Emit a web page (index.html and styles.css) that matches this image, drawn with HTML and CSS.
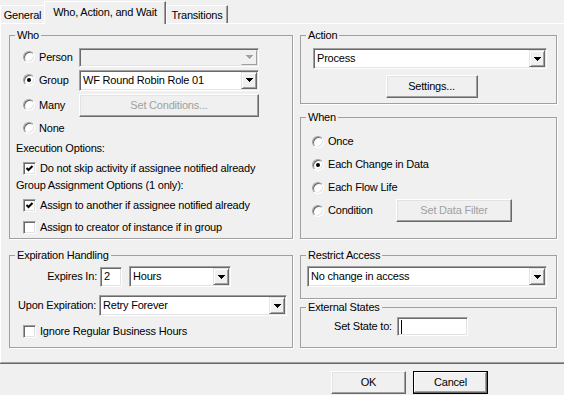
FILE: index.html
```html
<!DOCTYPE html>
<html>
<head>
<meta charset="utf-8">
<link rel="stylesheet" href="styles.css">
</head>
<body>
<div class="tabs">
  <div class="tab tab-general">General</div>
  <div class="tab tab-active">Who, Action, and Wait</div>
  <div class="tab tab-trans">Transitions</div>
</div>
<div class="panel">
  <div class="col col-left">
    <fieldset class="group g-who">
      <legend>Who</legend>
      <div class="who-body">
        <div class="row who-r1">
          <div class="opt who-opt"><span class="radio"></span><span>Person</span></div>
          <div class="combo combo-who combo-dis"><span class="combo-text"></span><span class="combo-btn"><svg width="7" height="4" viewBox="0 0 7 4"><path d="M0 0h7v1h-1v1h-1v1h-1v1h-1v-1h-1v-1h-1v-1h-1z" fill="#a0a0a0"/></svg></span></div>
        </div>
        <div class="row who-r2">
          <div class="opt who-opt"><span class="radio on"></span><span>Group</span></div>
          <div class="combo combo-who"><span class="combo-text">WF Round Robin Role 01</span><span class="combo-btn"><svg width="7" height="4" viewBox="0 0 7 4"><path d="M0 0h7v1h-1v1h-1v1h-1v1h-1v-1h-1v-1h-1v-1h-1z" fill="#000"/></svg></span></div>
        </div>
        <div class="row who-r3">
          <div class="opt who-opt"><span class="radio"></span><span>Many</span></div>
          <button class="btn btn-dis btn-cond">Set Conditions...</button>
        </div>
        <div class="row who-r4">
          <div class="opt who-opt"><span class="radio"></span><span>None</span></div>
        </div>
        <div class="row lbl-row exec-row">Execution Options:</div>
        <div class="row chk-row cb1-row"><span class="check"><svg width="9" height="9" viewBox="0 0 9 9"><polyline points="1.5,4 3.5,6 7.5,2" fill="none" stroke="#000" stroke-width="2"/></svg></span><span>Do not skip activity if assignee notified already</span></div>
        <div class="row lbl-row grp-row">Group Assignment Options (1 only):</div>
        <div class="row chk-row cb2-row"><span class="check"><svg width="9" height="9" viewBox="0 0 9 9"><polyline points="1.5,4 3.5,6 7.5,2" fill="none" stroke="#000" stroke-width="2"/></svg></span><span>Assign to another if assignee notified already</span></div>
        <div class="row chk-row cb3-row"><span class="check"></span><span>Assign to creator of instance if in group</span></div>
      </div>
    </fieldset>
    <fieldset class="group g-exp">
      <legend>Expiration Handling</legend>
      <div class="exp-body">
        <div class="row exp-r1">
          <span class="exp-lbl1">Expires In:</span>
          <div class="field field-num">2</div>
          <div class="combo combo-hours"><span class="combo-text">Hours</span><span class="combo-btn"><svg width="7" height="4" viewBox="0 0 7 4"><path d="M0 0h7v1h-1v1h-1v1h-1v1h-1v-1h-1v-1h-1v-1h-1z" fill="#000"/></svg></span></div>
        </div>
        <div class="row exp-r2">
          <span class="exp-lbl2">Upon Expiration:</span>
          <div class="combo combo-upon"><span class="combo-text">Retry Forever</span><span class="combo-btn"><svg width="7" height="4" viewBox="0 0 7 4"><path d="M0 0h7v1h-1v1h-1v1h-1v1h-1v-1h-1v-1h-1v-1h-1z" fill="#000"/></svg></span></div>
        </div>
        <div class="row chk-row exp-r3"><span class="check"></span><span>Ignore Regular Business Hours</span></div>
      </div>
    </fieldset>
  </div>
  <div class="col col-right">
    <fieldset class="group g-action">
      <legend>Action</legend>
      <div class="action-body">
        <div class="combo combo-action"><span class="combo-text">Process</span><span class="combo-btn"><svg width="7" height="4" viewBox="0 0 7 4"><path d="M0 0h7v1h-1v1h-1v1h-1v1h-1v-1h-1v-1h-1v-1h-1z" fill="#000"/></svg></span></div>
        <div class="settings-row"><button class="btn btn-settings">Settings...</button></div>
      </div>
    </fieldset>
    <fieldset class="group g-when">
      <legend>When</legend>
      <div class="when-body">
        <div class="row when-row"><div class="opt"><span class="radio"></span><span>Once</span></div></div>
        <div class="row when-row"><div class="opt"><span class="radio on"></span><span>Each Change in Data</span></div></div>
        <div class="row when-row"><div class="opt"><span class="radio"></span><span>Each Flow Life</span></div></div>
        <div class="row when-row"><div class="opt when-cond"><span class="radio"></span><span>Condition</span></div><button class="btn btn-dis btn-filter">Set Data Filter</button></div>
      </div>
    </fieldset>
    <fieldset class="group g-restrict">
      <legend>Restrict Access</legend>
      <div class="restrict-body">
        <div class="combo combo-restrict"><span class="combo-text">No change in access</span><span class="combo-btn"><svg width="7" height="4" viewBox="0 0 7 4"><path d="M0 0h7v1h-1v1h-1v1h-1v1h-1v-1h-1v-1h-1v-1h-1z" fill="#000"/></svg></span></div>
      </div>
    </fieldset>
    <fieldset class="group g-ext">
      <legend>External States</legend>
      <div class="ext-body">
        <span class="ext-lbl">Set State to:</span>
        <div class="field field-state"><span class="caret"></span></div>
      </div>
    </fieldset>
  </div>
</div>
<div class="buttons">
  <button class="btn btn-ok">OK</button>
  <button class="btn btn-cancel">Cancel</button>
</div>
</body>
</html>
```
FILE: styles.css
```css
html, body {
  margin: 0;
  padding: 0;
  background: #f0f0f0;
}
body {
  font-family: "Liberation Sans", Arial, sans-serif;
  font-size: 11px;
  line-height: 13px;
  letter-spacing: -0.2px;
  color: #000;
  width: 564px;
  height: 395px;
  overflow: hidden;
}

/* Tabs */
.tabs {
  display: flex;
  align-items: flex-end;
  height: 23px;
}
.tab {
  box-sizing: border-box;
  height: 18px;
  background: #f0f0f0;
  border-top: 1px solid #fff;
  border-left: 1px solid #fff;
  border-right: 1px solid #696969;
  box-shadow: inset -1px 0 0 #a0a0a0;
  display: flex;
  align-items: center;
  justify-content: center;
  padding-top: 2px;
  white-space: nowrap;
}
.tab-general {
  width: 44px;
  border-right: 0;
  box-shadow: none;
}
.tab-trans { width: 62px; }
.tab-active {
  width: 122px;
  height: 23px;
  margin-bottom: -1px;
  position: relative;
  z-index: 1;
  padding-top: 0;
  padding-bottom: 2px;
}

/* Panel */
.panel {
  display: flex;
  gap: 7px;
  border-top: 1px solid #fff;
  border-left: 1px solid #fff;
  border-bottom: 1px solid #a0a0a0;
  box-shadow: 0 1px 0 #696969;
  padding: 5px 0 14px 8px;
}
.col {
  display: flex;
  flex-direction: column;
}
.col-left { width: 284px; gap: 10px; }
.col-right { width: 257px; }

.group {
  margin: 0;
  padding: 0;
  min-width: 0;
  box-sizing: border-box;
  border: 1px solid #a0a0a0;
  box-shadow: 1px 1px 0 #fff;
}
.group legend {
  padding: 0 2px;
  margin-left: 5px;
  line-height: 13px;
  white-space: nowrap;
}
.g-who { height: 210px; }
.g-exp { height: 99px; }
.g-action { height: 75px; }
.g-when { height: 128px; margin-top: 7px; }
.g-restrict { height: 50px; margin-top: 10px; }
.g-ext { height: 47px; margin-top: 2px; }

.row {
  display: flex;
  align-items: center;
  white-space: nowrap;
}
.opt {
  display: flex;
  align-items: center;
  gap: 4px;
}

/* Radio */
.radio {
  width: 12px;
  height: 12px;
  box-sizing: border-box;
  border-radius: 50%;
  border: 1px solid;
  border-color: #a0a0a0 #fff #fff #a0a0a0;
  background: #fff;
  box-shadow: inset 1px 1px 0 #696969, inset -1px -1px 0 #e3e3e3;
  position: relative;
  flex: none;
}
.radio.on::after {
  content: "";
  position: absolute;
  left: 3px;
  top: 3px;
  width: 4px;
  height: 4px;
  border-radius: 50%;
  background: #000;
}

/* Checkbox */
.check {
  width: 13px;
  height: 13px;
  box-sizing: border-box;
  border: 1px solid;
  border-color: #a0a0a0 #fff #fff #a0a0a0;
  box-shadow: inset 1px 1px 0 #696969, inset -1px -1px 0 #e3e3e3;
  background: #fff;
  display: flex;
  align-items: center;
  justify-content: center;
  flex: none;
}
.chk-row { gap: 4px; }

/* Combo */
.combo {
  display: flex;
  align-items: stretch;
  height: 21px;
  box-sizing: border-box;
  background: #fff;
  border: 1px solid;
  border-color: #a0a0a0 #fff #fff #a0a0a0;
  box-shadow: inset 1px 1px 0 #696969, inset -1px -1px 0 #e3e3e3;
  padding: 1px;
  flex: none;
}
.combo-text {
  flex: 1;
  display: flex;
  align-items: center;
  padding-left: 2px;
  overflow: hidden;
}
.combo-btn {
  width: 16px;
  box-sizing: border-box;
  background: #f0f0f0;
  border: 1px solid;
  border-color: #e3e3e3 #696969 #696969 #e3e3e3;
  box-shadow: inset 1px 1px 0 #fff, inset -1px -1px 0 #a0a0a0;
  display: flex;
  align-items: center;
  justify-content: center;
}
.combo-dis { background: #f0f0f0; height: 19px; }
.combo-dis .combo-btn { border-color: #f0f0f0 #a0a0a0 #a0a0a0 #f0f0f0; box-shadow: none; }

/* Text field */
.field {
  height: 20px;
  box-sizing: border-box;
  background: #fff;
  border: 1px solid;
  border-color: #a0a0a0 #fff #fff #a0a0a0;
  box-shadow: inset 1px 1px 0 #696969, inset -1px -1px 0 #e3e3e3;
  padding: 0 3px;
  display: flex;
  align-items: center;
  flex: none;
}
.caret {
  width: 1px;
  height: 14px;
  background: #000;
}

/* Buttons */
.btn {
  appearance: none;
  margin: 0;
  padding: 0;
  font: inherit;
  letter-spacing: inherit;
  color: #000;
  height: 23px;
  box-sizing: border-box;
  background: #f0f0f0;
  border: 1px solid;
  border-color: #fff #696969 #696969 #fff;
  box-shadow: inset -1px -1px 0 #a0a0a0, inset 1px 1px 0 #e3e3e3;
  display: flex;
  align-items: center;
  justify-content: center;
  white-space: nowrap;
}
.btn-dis { color: #a0a0a0; }

/* Who */
.who-body {
  padding: 4px 0 0 6px;
}
.who-opt { width: 56px; margin-left: 7px; }
.combo-who { width: 180px; }
.btn-cond { width: 180px; }
.who-r1 { height: 22px; }
.who-r2 { height: 24px; }
.who-r3 { height: 26px; }
.who-r4 { height: 20px; }
.exec-row { height: 20px; }
.cb1-row { height: 20px; margin-left: 7px; }
.grp-row { height: 14px; }
.cb2-row { height: 26px; margin-left: 7px; }
.cb3-row { height: 18px; margin-left: 7px; }

/* Expiration */
.exp-body { padding: 4px 0 0 8px; }
.exp-r1 { height: 21px; }
.exp-lbl1 { width: 79px; text-align: right; }
.field-num { width: 22px; margin-left: 3px; }
.combo-hours { width: 102px; margin-left: 7px; }
.exp-r2 { height: 21px; margin-top: 8px; }
.exp-lbl2 { width: 81px; }
.combo-upon { width: 188px; }
.exp-r3 { height: 18px; margin-top: 6px; margin-left: 5px; }

/* Action */
.action-body { padding: 6px 0 0 12px; }
.combo-action { width: 234px; }
.settings-row {
  display: flex;
  justify-content: center;
  margin-top: 6px;
  padding-right: 6px;
}
.btn-settings { width: 92px; }

/* When */
.when-body { padding: 6px 0 0 11px; }
.when-row { height: 23px; }
.when-cond { width: 84px; }
.btn-filter { width: 116px; }

/* Restrict */
.restrict-body { padding: 4px 0 0 6px; }
.combo-restrict { width: 240px; }

/* External */
.ext-body {
  display: flex;
  align-items: center;
  padding: 3px 0 0 33px;
}
.ext-lbl { width: 63px; }
.field-state { width: 71px; height: 19px; }

/* Dialog buttons */
.buttons {
  display: flex;
  justify-content: flex-end;
  gap: 7px;
  margin-top: 8px;
  padding-right: 76px;
}
.btn-ok { width: 75px; }
.btn-cancel {
  width: 75px;
  border-color: #000;
  box-shadow: inset -1px -1px 0 #696969, inset 1px 1px 0 #fff, inset -2px -2px 0 #a0a0a0;
}
```
